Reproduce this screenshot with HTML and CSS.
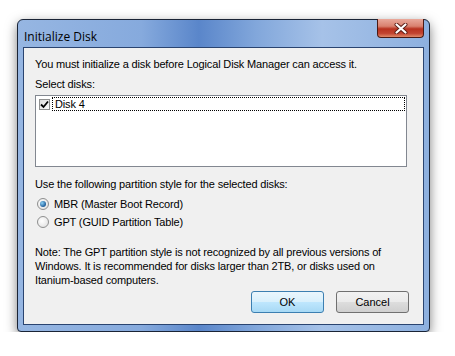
FILE: index.html
```html
<!DOCTYPE html>
<html lang="en">

<head>
    <meta charset="UTF-8">
    <title>Initialize Disk</title>
    <link rel="stylesheet" href="styles.css">
</head>

<body>
    <div class="shadow">
        <div class="window">
            <!-- title bar -->
            <div class="titlebar">
                <span class="title">Initialize Disk</span>
                <div class="close">
                    <svg width="14" height="11" viewBox="0 0 14 11">
                        <path d="M2.5 1.5 L11.5 9.5 M11.5 1.5 L2.5 9.5" stroke="#5a1c14" stroke-width="4" stroke-linecap="round" />
                        <path d="M2.5 1.5 L11.5 9.5 M11.5 1.5 L2.5 9.5" stroke="#fff" stroke-width="2.2" stroke-linecap="round" />
                    </svg>
                </div>
            </div>

            <!-- dialog body -->
            <div class="content">
                <p class="line">You must initialize a disk before Logical Disk Manager can access it.</p>
                <p class="line gap-s">Select disks:</p>
                <div class="listbox">
                    <div class="item">
                        <span class="check">
                            <svg width="9" height="9" viewBox="0 0 9 9">
                                <path d="M1 4.5 L3.5 7 L8 1.5" fill="none" stroke="#000" stroke-width="1.8" />
                            </svg>
                        </span>
                        <span class="focus">Disk 4</span>
                    </div>
                </div>

                <p class="line gap-l">Use the following partition style for the selected disks:</p>
                <div class="radio gap-s"><span class="dot on"></span>MBR (Master Boot Record)</div>
                <div class="radio gap-xs"><span class="dot"></span>GPT (GUID Partition Table)</div>

                <p class="line note">Note: The GPT partition style is not recognized by all previous versions of<br>
                    Windows. It is recommended for disks larger than 2TB, or disks used on<br>
                    Itanium-based computers.</p>

                <div class="buttons">
                    <button class="btn default">OK</button>
                    <button class="btn">Cancel</button>
                </div>
            </div>
        </div>
    </div>
</body>

</html>
```

FILE: styles.css
```css
* {
    margin: 0;
    padding: 0;
    box-sizing: border-box;
}

body {
    background: #fff;
    font-family: "Liberation Sans", Arial, sans-serif;
    font-size: 11px;
    letter-spacing: -0.15px;
    color: #000;
}

.shadow {
    width: 413px;
    height: 313px;
    margin: 19px 0 0 17px;
    border-radius: 7px 7px 5px 5px;
    box-shadow: 0 4px 12px rgba(0, 0, 0, 0.5);
}

.window {
    width: 100%;
    height: 100%;
    border: 1px solid #1a2436;
    border-radius: 6px 6px 4px 4px;
    background-color: #7ba2da;
    background-image: linear-gradient(to right, #96b6e2 0%, #86aadd 30%, #5a86ca 44%, #82a7db 58%, #a6c2e8 74%, #8db0df 100%);
    padding: 0 5px 6px 5px;
    display: flex;
    flex-direction: column;
}

.titlebar {
    height: 28px;
    display: flex;
    justify-content: space-between;
    align-items: flex-start;
}

.title {
    font-family: "Open Sans", sans-serif;
    font-size: 12px;
    letter-spacing: 0;
    margin-top: 8px;
    margin-left: 1px;
    color: #000;
}

.close {
    width: 47px;
    height: 19px;
    margin-top: -1px;
    border: 1px solid #4a1a14;
    border-top: none;
    border-radius: 0 0 4px 4px;
    background: linear-gradient(#e9a99b 0%, #d9816f 40%, #b8321f 55%, #c24431 80%, #e08a6a 100%);
    display: flex;
    align-items: center;
    justify-content: center;
}

.content {
    flex: 1;
    background: #f0f0f0;
    border: 1px solid #2a4470;
    padding: 9px 16px 11px 11px;
}

.line {
    line-height: 14px;
    white-space: nowrap;
}

.gap-xs {
    margin-top: 4px;
}

.gap-s {
    margin-top: 6px;
}

.gap-l {
    margin-top: 10px;
}

.listbox {
    margin-top: 4px;
    height: 72px;
    background: #fff;
    border: 1px solid #828790;
    padding: 1px;
}

.item {
    display: flex;
    align-items: center;
    height: 14px;
}

.check {
    width: 11px;
    height: 11px;
    margin: 0 2px;
    border: 1px solid #8e8f8f;
    background: linear-gradient(to bottom right, #dcdcdc, #fbfbfb);
    display: flex;
    align-items: center;
    justify-content: center;
}

.focus {
    flex: 1;
    height: 14px;
    line-height: 12px;
    padding-left: 2px;
    border: 1px dotted #000;
}

.radio {
    display: flex;
    align-items: center;
    height: 14px;
    line-height: 14px;
    padding-left: 2px;
}

.dot {
    width: 12px;
    height: 12px;
    border-radius: 50%;
    border: 1px solid #8e8f8f;
    background: radial-gradient(circle at 40% 40%, #fff, #dcdcdc);
    margin-right: 5px;
    display: flex;
    align-items: center;
    justify-content: center;
}

.dot.on::after {
    content: "";
    width: 6px;
    height: 6px;
    border-radius: 50%;
    background: radial-gradient(circle at 35% 35%, #8ad0f5, #1e5d9a 70%);
}

.note {
    margin-top: 16px;
}

.buttons {
    margin-top: 4px;
    margin-right: -2px;
    display: flex;
    justify-content: flex-end;
    gap: 12px;
}

.btn {
    width: 73px;
    height: 22px;
    font-family: "Liberation Sans", Arial, sans-serif;
    font-size: 11px;
    color: #000;
    border: 1px solid #707070;
    border-radius: 3px;
    background: linear-gradient(#f2f2f2 0%, #ebebeb 48%, #dddddd 52%, #cfcfcf 100%);
}

.btn.default {
    border-color: #3c7fb1;
    background: linear-gradient(#eaf6fd 0%, #d9f0fc 48%, #bee6fd 52%, #a7d9f5 100%);
}
```
